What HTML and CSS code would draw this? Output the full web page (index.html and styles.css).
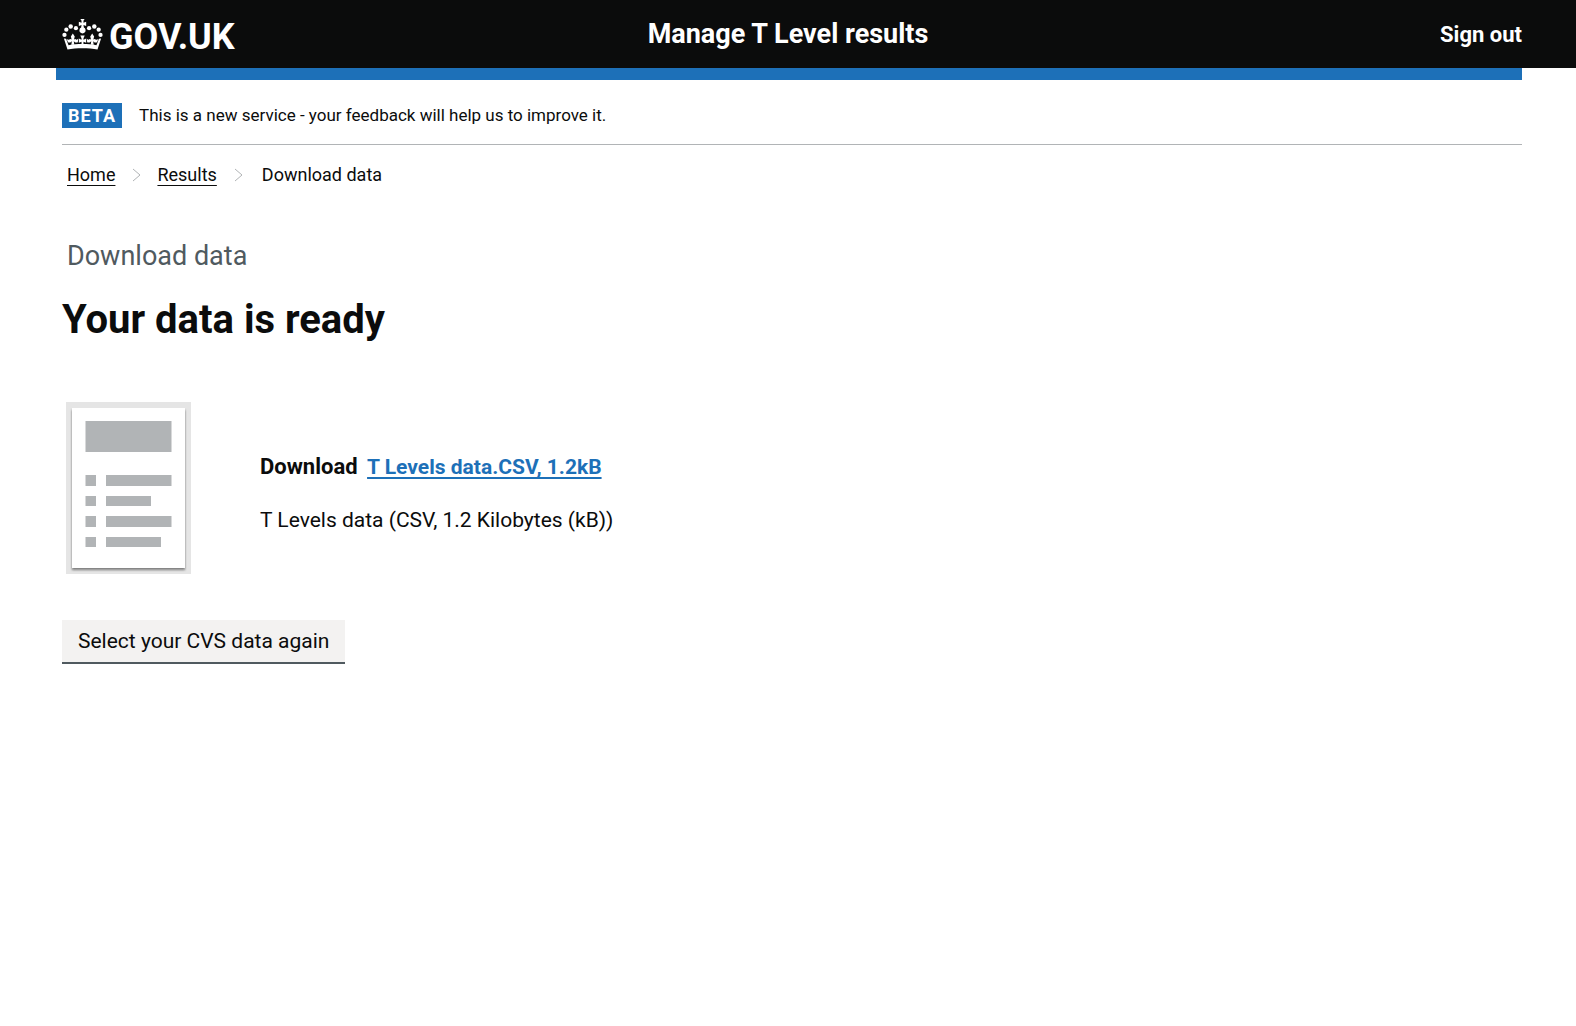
FILE: index.html
```html
<!DOCTYPE html>
<html lang="en">
<head>
<meta charset="utf-8">
<meta name="viewport" content="width=device-width, initial-scale=1">
<title>Your data is ready - Manage T Level results</title>
<link rel="stylesheet" href="styles.css">
</head>
<body>
<header class="header">
  <a class="logo" href="#">
    <svg class="crown" viewBox="0 0 42 32" aria-hidden="true" fill="currentColor">
      <path d="M20 1.800 18.800 0h4.400L22 1.800v2l2.800-1v4.400L22 6.200l.4 2.600a3.200 3.200 0 1 1-2.800 0l.4-2.600-2.800 1V2.800l2.800 1z"/>
      <circle cx="2.400" cy="16.500" r="2.200"/><circle cx="4.300" cy="11" r="2.200"/><circle cx="8.800" cy="7.800" r="2.300"/><circle cx="14.200" cy="9.500" r="2.200"/>
      <circle cx="39.600" cy="16.500" r="2.200"/><circle cx="37.700" cy="11" r="2.200"/><circle cx="33.200" cy="7.800" r="2.300"/><circle cx="27.800" cy="9.500" r="2.200"/>
      <path d="M1.800 20 4 20.500 6.600 27C11 26.200 16 25.900 21 25.900s10 .3 14.400 1.100l2.600-6.500 2.200-.5L36.500 31.500c-4.500-.8-10-1.200-15.500-1.200s-11 .4-15.500 1.200z"/>
      <path d="M20 26v-2.600l-2.800 1.200v-4.400l2.800 1.200v-1.600L18.700 17h4.600L22 19.800v1.600l2.800-1.200v4.400L22 23.400V26z"/>
      <path d="M9.500 26.500 10 22.600c-1 1.600-2.200 2.100-4 1.400l-1.500-3.500c1.300 1.200 2.700 1.200 3.900.2l1.400.4L9 18l2-3 2 3-.8 3.100 1.400-.4c1.200 1 2.100.8 3-.2l-.4 3.500c-1.800.7-3.200.2-4.200-1.400l.5 3.900z"/>
      <path d="M32.500 26.500 32 22.600c1 1.600 2.200 2.100 4 1.400l1.500-3.500c-1.300 1.200-2.700 1.200-3.900.2l-1.400.4L33 18l-2-3-2 3 .8 3.100-1.400-.4c-1.200 1-2.100.8-3-.2l.4 3.500c1.800.7 3.200.2 4.200-1.400l-.5 3.900z"/>
    </svg>
    <span>GOV.UK</span>
  </a>
  <a class="service" href="#">Manage T Level results</a>
  <a class="signout" href="#">Sign out</a>
</header>
<div class="bar"></div>
<div class="container">
  <div class="phase">
    <strong class="tag">BETA</strong>
    <span class="notice">This is a new service - your feedback will help us to improve it.</span>
  </div>
  <nav aria-label="Breadcrumb">
    <ol class="crumbs">
      <li><a href="#">Home</a></li>
      <li><svg class="chevron" viewBox="0 0 9 14" aria-hidden="true"><path d="M1 1l7 6-7 6"/></svg><a href="#">Results</a></li>
      <li><svg class="chevron" viewBox="0 0 9 14" aria-hidden="true"><path d="M1 1l7 6-7 6"/></svg><span class="current" aria-current="page">Download data</span></li>
    </ol>
  </nav>
  <main>
    <p class="caption">Download data</p>
    <h1>Your data is ready</h1>
    <section class="attachment">
      <svg class="thumb" viewBox="0 0 125 172" aria-hidden="true">
        <defs><filter id="shade" x="-10%" y="-10%" width="120%" height="120%"><feDropShadow dx="0" dy="2" stdDeviation="1" flood-color="#0b0c0c" flood-opacity=".5"/></filter></defs>
        <path fill="#e5e5e5" d="M0 0h125v172H0z"/>
        <path fill="#fff" filter="url(#shade)" d="M6 6h113v160H6z"/>
        <path fill="#b1b4b6" d="M19.500 19h86v31h-86zM19.500 73H30v11H19.500zM40 73h65.500v11H40zM19.500 94H30v10H19.500zM40 94h45v10H40zM19.500 114H30v11H19.500zM40 114h65.500v11H40zM19.500 135H30v10H19.500zM40 135h55v10H40z"/>
      </svg>
      <div class="details">
        <p class="title">Download <a href="#">T Levels data.CSV, 1.2kB</a></p>
        <p>T Levels data (CSV, 1.2 Kilobytes (kB))</p>
      </div>
    </section>
    <button class="button" type="button">Select your CVS data again</button>
  </main>
</div>
</body>
</html>
```
FILE: styles.css
```css
* { box-sizing: border-box; }
body {
  margin: 0;
  background: #fff;
  color: #0b0c0c;
  font-family: Roboto, "Liberation Sans", sans-serif;
  font-size: 21px;
  line-height: 28px;
}
p, h1, ol { margin: 0; padding: 0; }
.header {
  display: grid;
  grid-template-columns: 1fr auto 1fr;
  align-items: center;
  height: 68px;
  padding: 2px 54px 0;
  background: #0b0c0c;
  color: #fff;
}
.header a { color: inherit; text-decoration: none; font-weight: 700; }
.logo {
  display: flex;
  align-items: center;
  gap: 6px;
  font-size: 36px;
  line-height: 40px;
  padding: 4px 0 0 8px;
}
.crown { width: 41px; height: 31px; margin-bottom: 5px; }
.service { font-size: 27px; line-height: 36px; padding-bottom: 3px; }
.signout { justify-self: end; font-size: 22px; }
.bar { height: 12px; margin: 0 54px 0 56px; background: #1d70b8; }
.container { padding: 0 54px 0 62px; }
.phase {
  display: flex;
  align-items: center;
  gap: 17px;
  padding: 23px 0 16px;
  border-bottom: 1px solid #b1b4b6;
  font-size: 18px;
  line-height: 25px;
}
.tag {
  padding: 0 6px;
  background: #1d70b8;
  color: #fff;
  letter-spacing: 1px;
}
.notice { font-size: 17px; }
.crumbs {
  display: flex;
  gap: 17px;
  padding: 16px 5px 0;
  list-style: none;
  font-size: 18px;
}
.crumbs li { display: flex; align-items: center; gap: 16px; }
.crumbs a {
  color: inherit;
  text-underline-offset: 4px;
  text-decoration-thickness: 1px;
}
.current { padding-left: 3px; }
.chevron { width: 9px; height: 14px; fill: none; stroke: #b1b4b6; stroke-width: 1; }
.caption { padding: 49px 5px 0; font-size: 27px; line-height: 36px; color: #505a5f; }
h1 { padding-top: 21px; font-size: 40px; line-height: 50px; }
.attachment { display: flex; gap: 69px; padding: 57px 4px 46px; }
.thumb { width: 125px; height: 172px; }
.details { padding-top: 51px; }
.title { padding-bottom: 25px; font-size: 22px; font-weight: 700; }
.title a {
  margin-left: 4px;
  color: #1d70b8;
  font-size: 21px;
  text-underline-offset: 3px;
  text-decoration-thickness: 2px;
  text-decoration-skip-ink: none;
}
.button {
  padding: 7px 16px;
  border: 0;
  border-bottom: 2px solid #505a5f;
  background: #f3f2f1;
  color: inherit;
  font: inherit;
}
```
